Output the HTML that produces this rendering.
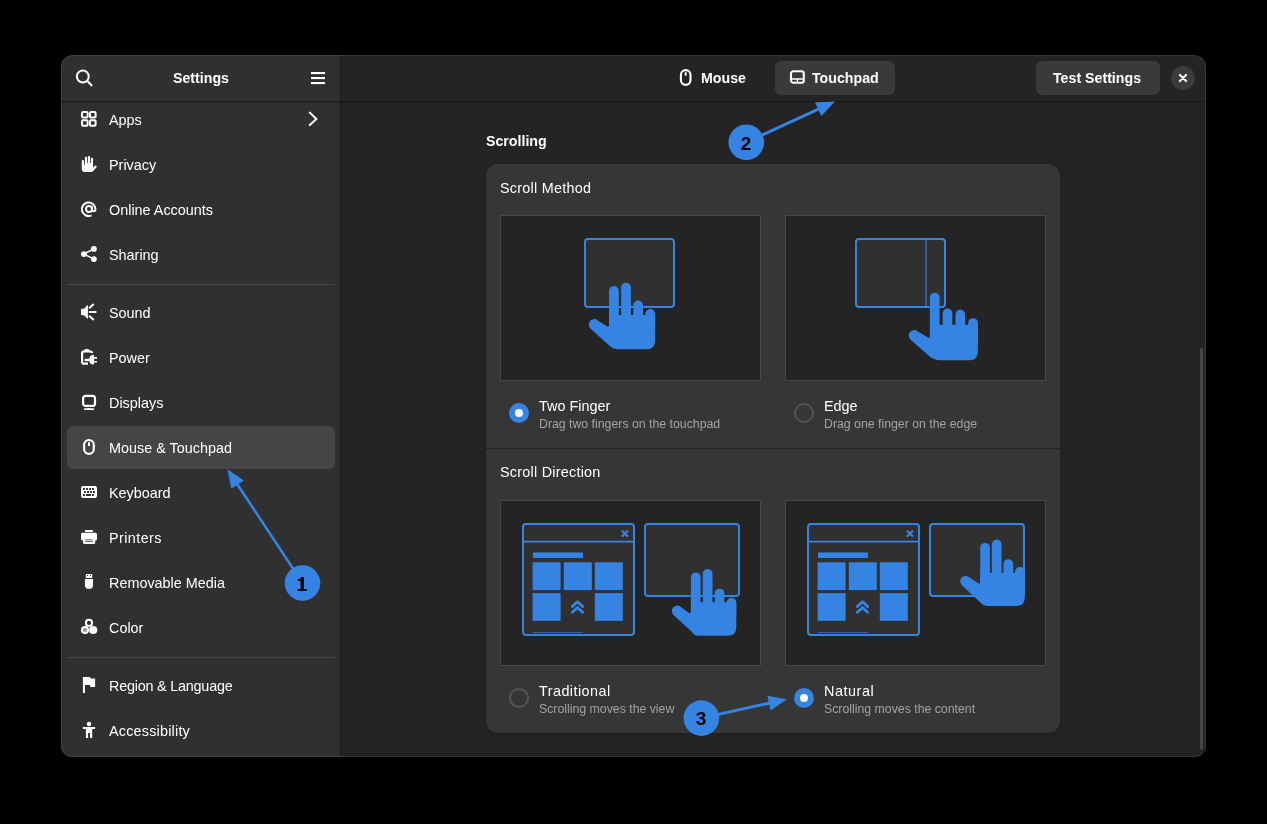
<!DOCTYPE html>
<html><head><meta charset="utf-8"><style>
*{box-sizing:border-box;margin:0;padding:0}
html,body{width:1267px;height:824px;background:#000;overflow:hidden}
body{font-family:"Liberation Sans",sans-serif;color:#fff;position:relative}
.a{position:absolute}
.t{position:absolute;white-space:nowrap;line-height:1;will-change:transform}
#win{position:absolute;left:61px;top:55px;width:1145px;height:702px;border-radius:12px 12px 11px 11px;overflow:hidden;background:#242424}
#winborder{position:absolute;left:61px;top:55px;width:1145px;height:702px;border-radius:12px 12px 11px 11px;border:1px solid rgba(255,255,255,0.09);pointer-events:none}
svg{position:absolute;overflow:visible}
</style></head><body>
<div id="win">
<div class="a" style="left:0;top:0;width:279px;height:702px;background:#303030"></div>
<div class="a" style="left:279px;top:0;width:1px;height:702px;background:#1b1b1b"></div>
<div class="a" style="left:0;top:46px;width:1145px;height:1px;background:#181818"></div>
<div class="a" style="left:0;top:47px;width:1145px;height:1px;background:rgba(0,0,0,0.12)"></div>
<div class="a" style="left:0;top:48px;width:1145px;height:1px;background:rgba(0,0,0,0.05)"></div>
</div>
<svg style="left:75px;top:69px" width="18" height="18" viewBox="0 0 18 18"><circle cx="7.8" cy="7.5" r="5.9" fill="none" stroke="#fff" stroke-width="2"/><path d="M12.3 12 L16.5 16.3" stroke="#fff" stroke-width="2.1" stroke-linecap="round"/></svg>
<div class="t" style="left:201.3px;top:71.08px;font-size:14.2px;font-weight:700;transform:translateX(-50%)">Settings</div>
<svg style="left:311px;top:72px" width="14" height="12" viewBox="0 0 14 12"><rect x="0" y="0" width="14" height="2.1" fill="#fff"/><rect x="0" y="5" width="14" height="2.1" fill="#fff"/><rect x="0" y="10" width="14" height="2.1" fill="#fff"/></svg>
<div class="a" style="left:67px;top:426px;width:268px;height:43px;border-radius:6px;background:#454545"></div>
<div class="t" style="left:109px;top:112.81px;font-size:14.4px;letter-spacing:0px">Apps</div>
<svg style="left:81px;top:111px" width="16" height="16" viewBox="0 0 16 16"><g fill="none" stroke="#fff" stroke-width="2"><rect x="1" y="1" width="5.6" height="5.6" rx="1"/><rect x="9" y="1" width="5.6" height="5.6" rx="1"/><rect x="1" y="9.2" width="5.6" height="5.6" rx="1"/><rect x="9" y="9.2" width="5.6" height="5.6" rx="1"/></g></svg>
<div class="t" style="left:109px;top:157.81px;font-size:14.4px;letter-spacing:0px">Privacy</div>
<svg style="left:81px;top:156px" width="16" height="16" viewBox="0 0 16 16"><path fill="#fff" d="M0.8 5a1.1 1.1 0 0 1 2.2 0V8.5h0.9V1.9a1.1 1.1 0 0 1 2.2 0V7h0.8V1.1a1.1 1.1 0 0 1 2.2 0V7h0.8V2.9a1.1 1.1 0 0 1 2.2 0V11.8l1.5-1.9a1.2 1.2 0 0 1 1.9 1.45L12.3 15Q11.4 16 10 16H3.8A3 3 0 0 1 0.8 13z"/></svg>
<div class="t" style="left:109px;top:202.81px;font-size:14.4px;letter-spacing:0px">Online Accounts</div>
<svg style="left:81px;top:201px" width="16" height="16" viewBox="0 0 16 16"><g fill="none" stroke="#fff" stroke-width="2"><circle cx="8" cy="8" r="3"/><path d="M11 5.2v3.3a1.7 1.7 0 0 0 3.4 0V8A6.8 6.8 0 1 0 10.6 14.3"/></g></svg>
<div class="t" style="left:109px;top:247.81px;font-size:14.4px;letter-spacing:0px">Sharing</div>
<svg style="left:81px;top:246px" width="16" height="16" viewBox="0 0 16 16"><g fill="#fff"><circle cx="12.9" cy="2.9" r="2.9"/><circle cx="2.9" cy="8.1" r="2.9"/><circle cx="12.9" cy="13.1" r="2.9"/></g><path d="M12.9 2.9L2.9 8.1L12.9 13.1" fill="none" stroke="#fff" stroke-width="1.6"/></svg>
<div class="t" style="left:109px;top:305.81px;font-size:14.4px;letter-spacing:0px">Sound</div>
<svg style="left:81px;top:304px" width="16" height="16" viewBox="0 0 16 16"><path fill="#fff" d="M0 5.5Q0 4.7 0.8 4.7H3L6.9 0.8V15.1L3 11.3H0.8Q0 11.3 0 10.5z"/><g stroke="#fff" stroke-width="2" stroke-linecap="round"><path d="M8.6 3.8L12.2 0.6"/><path d="M8.6 12.2L12.2 15.4"/><path d="M8.6 8H14.6"/></g></svg>
<div class="t" style="left:109px;top:350.81px;font-size:14.4px;letter-spacing:0px">Power</div>
<svg style="left:81px;top:349px" width="16" height="16" viewBox="0 0 16 16"><g fill="none" stroke="#fff" stroke-width="2.2"><path d="M7 14.7H3.1Q1.1 14.7 1.1 12.7V4.3Q1.1 2.3 3.1 2.3H9.2Q10.9 2.3 11.3 4"/></g><rect x="3.7" y="-0.1" width="4.4" height="2.6" rx="0.8" fill="#fff"/><path fill="#fff" d="M8.2 10.6Q8.2 6 12.3 6H13V8.1H16V9.8H13V11.9H16V13.6H13V15.6H12.3Q8.2 15.6 8.2 10.6z"/><rect x="3.7" y="9.8" width="5" height="2.3" fill="#fff"/></svg>
<div class="t" style="left:109px;top:395.81px;font-size:14.4px;letter-spacing:0px">Displays</div>
<svg style="left:81px;top:394px" width="16" height="16" viewBox="0 0 16 16"><rect x="2.1" y="1.9" width="11.9" height="10" rx="2.5" fill="none" stroke="#fff" stroke-width="2.2"/><path fill="#fff" d="M2.9 16V14.6Q8 13.4 13.1 14.6V16z"/></svg>
<div class="t" style="left:109px;top:440.81px;font-size:14.4px;letter-spacing:0px">Mouse &amp; Touchpad</div>
<svg style="left:81px;top:439px" width="16" height="16" viewBox="0 0 16 16"><rect x="3.1" y="1" width="9.7" height="13.9" rx="4.85" fill="none" stroke="#fff" stroke-width="2.2"/><rect x="7" y="2.9" width="2" height="4.1" rx="0.6" fill="#fff"/></svg>
<div class="t" style="left:109px;top:485.81px;font-size:14.4px;letter-spacing:0px">Keyboard</div>
<svg style="left:81px;top:484px" width="16" height="16" viewBox="0 0 16 16"><path fill="#fff" fill-rule="evenodd" d="M2 2H14Q16 2 16 4V12Q16 14 14 14H2Q0 14 0 12V4Q0 2 2 2z M2 4v1.9h1.9V4z M5 4v1.9h1.9V4z M8.1 4v1.9H10V4z M11 4v1.9h1.9V4z M3 7v1.9h1.9V7z M6.1 7v1.9H8V7z M9.1 7v1.9H11V7z M12 7v1.9h1.9V7z M2 10.1V12h1.9v-1.9z M5 10.1V12h5v-1.9z M11 10.1V12h1.9v-1.9z"/></svg>
<div class="t" style="left:109px;top:530.81px;font-size:14.4px;letter-spacing:0.42px">Printers</div>
<svg style="left:81px;top:529px" width="16" height="16" viewBox="0 0 16 16"><path fill="#fff" fill-rule="evenodd" d="M1.5 3.8H14.5Q16 3.8 16 5.3V10.2Q16 11.6 14.2 11.6V13.4Q14.2 14.9 12.7 14.9H3.5Q2 14.9 2 13.4V11.6Q0 11.6 0 10.2V5.3Q0 3.8 1.5 3.8z M4.3 10.4V12.8H11.6V10.4z"/><rect x="3.9" y="0.9" width="8.3" height="2.2" rx="1" fill="#fff"/><rect x="4.3" y="11.2" width="7.3" height="0.8" fill="#fff"/></svg>
<div class="t" style="left:109px;top:575.81px;font-size:14.4px;letter-spacing:0px">Removable Media</div>
<svg style="left:81px;top:574px" width="16" height="16" viewBox="0 0 16 16"><path fill="#fff" fill-rule="evenodd" d="M4.8 0H11.2V4.1H4.8z M6 1.1v0.9h1v-0.9z M9 1.1v0.9h1v-0.9z"/><path fill="#fff" d="M3.9 4.9H12V11Q12 15.1 8 15.1Q3.9 15.1 3.9 11z"/></svg>
<div class="t" style="left:109px;top:620.81px;font-size:14.4px;letter-spacing:0px">Color</div>
<svg style="left:81px;top:619px" width="16" height="16" viewBox="0 0 16 16"><circle cx="8" cy="3.9" r="3.1" fill="none" stroke="#fff" stroke-width="2"/><circle cx="4" cy="11" r="3.1" fill="#999" stroke="#fff" stroke-width="2"/><circle cx="12.2" cy="11" r="4.1" fill="#fff"/></svg>
<div class="t" style="left:109px;top:678.81px;font-size:14.4px;letter-spacing:-0.22px">Region &amp; Language</div>
<svg style="left:81px;top:677px" width="16" height="16" viewBox="0 0 16 16"><path fill="#fff" d="M1.9 0H9.1L9.6 1.5H14.1V9.9H9.4L8.9 8.1H4V16H1.9z"/></svg>
<div class="t" style="left:109px;top:723.81px;font-size:14.4px;letter-spacing:0.2px">Accessibility</div>
<svg style="left:81px;top:722px" width="16" height="16" viewBox="0 0 16 16"><circle cx="8" cy="2" r="2.2" fill="#fff"/><path fill="#fff" d="M1.9 4.9H14.1V7.05H11.2V16H9V11H7.1V16H4.9V7.05H1.9z"/></svg>
<svg style="left:300px;top:105px" width="30" height="30" viewBox="0 0 30 30"><path d="M9.8 7.6L16.4 14L9.8 20" fill="none" stroke="#fff" stroke-width="2" stroke-linecap="round" stroke-linejoin="round"/></svg>
<div class="a" style="left:67px;top:284px;width:268px;height:1px;background:#474747"></div>
<div class="a" style="left:67px;top:657px;width:268px;height:1px;background:#474747"></div>
<div class="a" style="left:775px;top:61px;width:120px;height:34px;border-radius:6px;background:#3a3a3a"></div>
<div class="a" style="left:1036px;top:61px;width:124px;height:34px;border-radius:6px;background:#3a3a3a"></div>
<div class="a" style="left:1171px;top:66px;width:24px;height:24px;border-radius:50%;background:#3b3b3b"></div>
<svg style="left:1171px;top:66px" width="24" height="24" viewBox="0 0 24 24"><path d="M8.9 8.9L15.1 15.1M15.1 8.9L8.9 15.1" stroke="#fff" stroke-width="2.1" stroke-linecap="round"/></svg>
<svg style="left:679px;top:69px" width="14" height="17" viewBox="0 0 14 17"><rect x="1.9" y="1.1" width="9.6" height="14.8" rx="4.8" fill="none" stroke="#fff" stroke-width="2.1"/><rect x="5.7" y="3.2" width="2" height="3.5" rx="0.5" fill="#fff"/></svg>
<div class="t" style="left:700.5px;top:70.98px;font-size:14.2px;font-weight:700">Mouse</div>
<svg style="left:789px;top:69px" width="17" height="16" viewBox="0 0 17 16"><rect x="2" y="2.2" width="12.8" height="11.6" rx="2.4" fill="none" stroke="#fff" stroke-width="2.1"/><path d="M2 10H14.8M8.4 10V13.5" stroke="#fff" stroke-width="1.3"/></svg>
<div class="t" style="left:811.5px;top:70.78px;font-size:14.2px;font-weight:700">Touchpad</div>
<div class="t" style="left:1052.5px;top:70.78px;font-size:14.2px;font-weight:700">Test Settings</div>
<div class="a" style="left:1200px;top:348px;width:3px;height:402px;border-radius:2px;background:#464646"></div>
<div class="t" style="left:486px;top:134.48px;font-size:14.2px;font-weight:700">Scrolling</div>
<div class="a" style="left:486px;top:164px;width:574px;height:569px;border-radius:12px;background:#363636;box-shadow:0 0 0 1px rgba(0,0,0,0.03),0 1px 3px 1px rgba(0,0,0,0.07),0 2px 6px 2px rgba(0,0,0,0.03)"></div>
<div class="a" style="left:486px;top:448px;width:574px;height:1px;background:#242424"></div>
<div class="t" style="left:500px;top:181.01px;font-size:14.4px;letter-spacing:0.25px">Scroll Method</div>
<div class="t" style="left:500px;top:465.41px;font-size:14.4px;letter-spacing:0.24px">Scroll Direction</div>
<svg style="left:509px;top:403.2px" width="20" height="20" viewBox="0 0 20 20"><circle cx="10" cy="10" r="10" fill="#3584e4"/><circle cx="10" cy="10" r="4" fill="#fff"/></svg>
<div class="t" style="left:539px;top:398.61px;font-size:14.4px;letter-spacing:0px">Two Finger</div>
<div class="t" style="left:539px;top:417.59px;font-size:12.3px;color:#a3a3a3">Drag two fingers on the touchpad</div>
<svg style="left:794px;top:403.2px" width="20" height="20" viewBox="0 0 20 20"><circle cx="10" cy="10" r="9" fill="none" stroke="#555" stroke-width="2"/></svg>
<div class="t" style="left:824px;top:398.61px;font-size:14.4px;letter-spacing:0px">Edge</div>
<div class="t" style="left:824px;top:417.59px;font-size:12.3px;color:#a3a3a3">Drag one finger on the edge</div>
<svg style="left:509px;top:688px" width="20" height="20" viewBox="0 0 20 20"><circle cx="10" cy="10" r="9" fill="none" stroke="#555" stroke-width="2"/></svg>
<div class="t" style="left:539px;top:683.81px;font-size:14.4px;letter-spacing:0.45px">Traditional</div>
<div class="t" style="left:539px;top:702.79px;font-size:12.3px;color:#a3a3a3">Scrolling moves the view</div>
<svg style="left:794px;top:688px" width="20" height="20" viewBox="0 0 20 20"><circle cx="10" cy="10" r="10" fill="#3584e4"/><circle cx="10" cy="10" r="4" fill="#fff"/></svg>
<div class="t" style="left:824px;top:683.81px;font-size:14.4px;letter-spacing:0.55px">Natural</div>
<div class="t" style="left:824px;top:702.79px;font-size:12.3px;color:#a3a3a3">Scrolling moves the content</div>
<div class="a" style="left:500px;top:215px;width:261px;height:166px;background:#242424;border:1px solid #474747"></div>
<svg style="left:500px;top:215px" width="261" height="165" viewBox="0 0 261 165"><rect x="85" y="24" width="89" height="68" rx="3" fill="#303030" stroke="#3584e4" stroke-width="2"/><rect x="109.10" y="71.10" width="9.7" height="48.20" rx="4.85" fill="#3584e4"/><rect x="121.20" y="67.70" width="9.7" height="51.60" rx="4.85" fill="#3584e4"/><rect x="133.30" y="85.60" width="9.7" height="33.70" rx="4.85" fill="#3584e4"/><rect x="145.40" y="94.00" width="9.7" height="25.30" rx="4.85" fill="#3584e4"/><path fill="#3584e4" d="M109.10 100.00H155.10V125.80Q155.10 134.30 146.60 134.30H116.60Q112.80 134.30 109.80 131.10L90.70 113.70A5.4 5.4 0 0 1 97.70 105.40L106.90 111.30Q109.10 112.90 109.10 109.80z"/></svg>
<div class="a" style="left:785px;top:215px;width:261px;height:166px;background:#242424;border:1px solid #474747"></div>
<svg style="left:785px;top:215px" width="261" height="165" viewBox="0 0 261 165"><rect x="71" y="24" width="89" height="68" rx="3" fill="#303030" stroke="#3584e4" stroke-width="2"/><path d="M141 25V91" stroke="#3584e4" stroke-width="1.2" opacity="0.9"/><rect x="144.90" y="77.70" width="9.7" height="52.60" rx="4.85" fill="#3584e4"/><rect x="157.67" y="93.50" width="9.7" height="36.80" rx="4.85" fill="#3584e4"/><rect x="170.43" y="94.80" width="9.7" height="35.50" rx="4.85" fill="#3584e4"/><rect x="183.20" y="103.20" width="9.7" height="27.10" rx="4.85" fill="#3584e4"/><path fill="#3584e4" d="M144.90 109.70H192.90V136.80Q192.90 145.30 184.40 145.30H153.40Q149.20 145.30 145.36 142.10L125.70 124.70A5.4 5.4 0 0 1 132.70 116.40L142.70 122.30Q144.90 123.90 144.90 120.80z"/></svg>
<div class="a" style="left:500px;top:500px;width:261px;height:166px;background:#242424;border:1px solid #474747"></div>
<svg style="left:500px;top:500px" width="261" height="165" viewBox="0 0 261 165"><rect x="23" y="24" width="111" height="111" rx="3" fill="#303030" stroke="#3584e4" stroke-width="2"/><path d="M23 41.7H134" stroke="#3584e4" stroke-width="1.8"/><path d="M122.5 31.2L127.4 36M127.4 31.2L122.5 36" stroke="#3584e4" stroke-width="2.3" stroke-linecap="round"/><rect x="33" y="52.5" width="50" height="5.5" fill="#3584e4"/><rect x="32.6" y="62.3" width="28" height="27.8" fill="#3584e4"/><rect x="63.8" y="62.3" width="28" height="27.8" fill="#3584e4"/><rect x="94.8" y="62.3" width="28" height="27.8" fill="#3584e4"/><rect x="32.6" y="93.1" width="28" height="27.8" fill="#3584e4"/><rect x="94.8" y="93.1" width="28" height="27.8" fill="#3584e4"/><path d="M72.4 106.4L77.5 101.7L82.6 106.4M72.4 112.2L77.5 107.5L82.6 112.2" fill="none" stroke="#3584e4" stroke-width="2.9" stroke-linecap="round" stroke-linejoin="round"/><path d="M33 132.4H83" stroke="#3584e4" stroke-width="1" opacity="0.7"/><rect x="145" y="24" width="94" height="72" rx="3" fill="#303030" stroke="#3584e4" stroke-width="2"/><rect x="190.90" y="72.40" width="9.7" height="48.40" rx="4.85" fill="#3584e4"/><rect x="202.80" y="69.10" width="9.7" height="51.70" rx="4.85" fill="#3584e4"/><rect x="214.70" y="88.70" width="9.7" height="32.10" rx="4.85" fill="#3584e4"/><rect x="226.60" y="97.70" width="9.7" height="23.10" rx="4.85" fill="#3584e4"/><path fill="#3584e4" d="M190.90 102.30H236.30V127.30Q236.30 135.80 227.80 135.80H198.10Q194.42 135.80 192.52 132.60L173.80 115.20A5.4 5.4 0 0 1 180.80 106.90L188.70 112.80Q190.90 114.40 190.90 111.30z"/></svg>
<div class="a" style="left:785px;top:500px;width:261px;height:166px;background:#242424;border:1px solid #474747"></div>
<svg style="left:785px;top:500px" width="261" height="165" viewBox="0 0 261 165"><rect x="23" y="24" width="111" height="111" rx="3" fill="#303030" stroke="#3584e4" stroke-width="2"/><path d="M23 41.7H134" stroke="#3584e4" stroke-width="1.8"/><path d="M122.5 31.2L127.4 36M127.4 31.2L122.5 36" stroke="#3584e4" stroke-width="2.3" stroke-linecap="round"/><rect x="33" y="52.5" width="50" height="5.5" fill="#3584e4"/><rect x="32.6" y="62.3" width="28" height="27.8" fill="#3584e4"/><rect x="63.8" y="62.3" width="28" height="27.8" fill="#3584e4"/><rect x="94.8" y="62.3" width="28" height="27.8" fill="#3584e4"/><rect x="32.6" y="93.1" width="28" height="27.8" fill="#3584e4"/><rect x="94.8" y="93.1" width="28" height="27.8" fill="#3584e4"/><path d="M72.4 106.4L77.5 101.7L82.6 106.4M72.4 112.2L77.5 107.5L82.6 112.2" fill="none" stroke="#3584e4" stroke-width="2.9" stroke-linecap="round" stroke-linejoin="round"/><path d="M33 132.4H83" stroke="#3584e4" stroke-width="1" opacity="0.7"/><rect x="145" y="24" width="94" height="72" rx="3" fill="#303030" stroke="#3584e4" stroke-width="2"/><rect x="195.20" y="42.90" width="9.7" height="48.20" rx="4.85" fill="#3584e4"/><rect x="206.83" y="39.50" width="9.7" height="51.60" rx="4.85" fill="#3584e4"/><rect x="218.47" y="59.20" width="9.7" height="31.90" rx="4.85" fill="#3584e4"/><rect x="230.10" y="67.10" width="9.7" height="24.00" rx="4.85" fill="#3584e4"/><path fill="#3584e4" d="M195.20 72.80H239.80V97.60Q239.80 106.10 231.30 106.10H202.00Q198.48 106.10 195.94 102.90L177.20 85.50A5.4 5.4 0 0 1 184.20 77.20L193.00 83.10Q195.20 84.70 195.20 81.60z"/></svg>
<svg style="left:0;top:0" width="1267" height="824" viewBox="0 0 1267 824"><path d="M302.50 583.00L236.49 482.97" stroke="#3584e4" stroke-width="2.6"/><path d="M227.40 469.20L243.85 480.51L231.33 488.77z" fill="#3584e4"/><circle cx="302.5" cy="583" r="17.8" fill="#3584e4"/><path d="M746.30 142.30L820.02 108.31" stroke="#3584e4" stroke-width="3"/><path d="M835.00 101.40L821.34 115.96L815.06 102.34z" fill="#3584e4"/><circle cx="746.3" cy="142.3" r="17.8" fill="#3584e4"/><path d="M701.40 718.10L770.99 702.75" stroke="#3584e4" stroke-width="3"/><path d="M787.10 699.20L770.65 710.51L767.42 695.86z" fill="#3584e4"/><circle cx="701.4" cy="718.1" r="17.8" fill="#3584e4"/></svg>
<svg style="left:0;top:0" width="1267" height="824" viewBox="0 0 1267 824"><path fill="#000" d="M297.7 578.9H300.5V577.1H304V589.1H306.8V590.9H297.7V589.1H300.5V580.8H297.7z"/></svg>
<div class="t" style="left:746.3px;top:134.02px;font-size:19px;font-weight:700;color:#000;transform:translateX(-50%)">2</div>
<div class="t" style="left:701.1px;top:709.42px;font-size:19px;font-weight:700;color:#000;transform:translateX(-50%)">3</div>
<div id="winborder"></div>
</body></html>
